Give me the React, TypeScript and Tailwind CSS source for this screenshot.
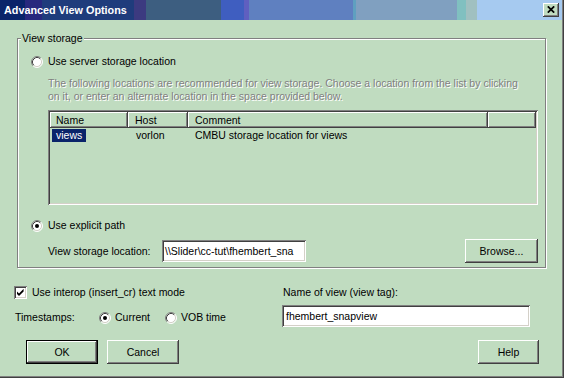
import React from "react";

// classic 3D edges, on the money-green dialog face
const sunken =
  "shadow-[inset_1px_1px_0_#808080,inset_-1px_-1px_0_#fff,inset_2px_2px_0_#404040,inset_-2px_-2px_0_#d4d0c8]";
const raised =
  "shadow-[inset_-1px_-1px_0_#404040,inset_1px_1px_0_#fff,inset_-2px_-2px_0_#808080]";

function Radio({ checked = false }: { checked?: boolean }) {
  return (
    <svg width="12" height="12" viewBox="0 0 12 12" className="shrink-0">
      <circle cx="6" cy="6" r="5" fill="#fff" />
      <path d="M2.11 9.89A5.5 5.5 0 0 1 9.89 2.11" fill="none" stroke="#808080" />
      <path d="M2.82 9.18A4.5 4.5 0 0 1 9.18 2.82" fill="none" stroke="#404040" />
      <path d="M9.89 2.11A5.5 5.5 0 0 1 2.11 9.89" fill="none" stroke="#fff" />
      <path d="M9.18 2.82A4.5 4.5 0 0 1 2.82 9.18" fill="none" stroke="#d4d0c8" />
      {checked && <circle cx="6" cy="6" r="2" fill="#000" />}
    </svg>
  );
}

function Checkbox() {
  return (
    <span className={`flex h-[13px] w-[13px] shrink-0 items-center justify-center bg-white ${sunken}`}>
      <svg width="7" height="7" viewBox="0 0 7 7">
        <polygon points="0,2.4 2,4.4 6.6,-0.2 6.6,2.4 2,7 0,5" fill="#000" />
      </svg>
    </span>
  );
}

function Button({
  label,
  width,
  isDefault = false,
}: {
  label: string;
  width: string;
  isDefault?: boolean;
}) {
  return (
    <div
      className={`flex h-[24px] items-center justify-center bg-[#c0dcc0] ${width} ${
        isDefault ? "border border-black" : ""
      }`}
    >
      <div className={`flex h-full w-full items-center justify-center ${raised}`}>
        {label}
      </div>
    </div>
  );
}

export default function App() {
  return (
    <div
      className={`flex h-[378px] w-[564px] flex-col overflow-hidden bg-[#c0dcc0] font-['Liberation_Sans',Arial,sans-serif] text-[10.5px] leading-[13px] text-black shadow-[inset_-1px_-1px_0_#404040,inset_-2px_-2px_0_#808080]`}
    >
      {/* Title bar */}
      <div className="mr-[2px] flex h-[20px] shrink-0 items-center bg-[linear-gradient(to_right,#0a246a_0_25px,#28287e_25px_42px,#1f3c7c_42px_134px,#3c3a80_134px_146px,#3d5e80_146px_221px,#3f5ec0_221px_244px,#5f5fc0_244px_249px,#5f80c0_249px_353px,#5fa0c0_353px_356px,#80a0c0_356px_457px,#80c0c0_457px_466px,#a0c0c0_466px_477px,#a6caf0_477px)] pl-[4px] pr-[3px]">
        <span className="text-[10.8px] font-bold leading-none text-white">
          Advanced View Options
        </span>
        <div
          className={`ml-auto flex h-[14px] w-[16px] items-center justify-center bg-[#c0dcc0] ${raised}`}
        >
          <svg width="8" height="7" viewBox="0 0 8 7" className="-mt-px -ml-px">
            <path d="M0.8 0.3L7.2 6.7M7.2 0.3L0.8 6.7" stroke="#000" strokeWidth="1.7" />
          </svg>
        </div>
      </div>

      {/* View storage group */}
      <fieldset className="ml-[17px] mt-[12px] w-[529px] border border-[#808080] pb-[4px] shadow-[1px_1px_0_#fff,inset_1px_1px_0_#fff]">
        <legend className="ml-[3px] bg-[#c0dcc0] px-[1px] leading-[13px]">
          View storage
        </legend>

        <div className="mt-[10px] flex h-[13px] items-center gap-[5px] pl-[13px]">
          <Radio />
          <span>Use server storage location</span>
        </div>

        <p className="ml-[30px] mt-[9px] whitespace-nowrap text-[#808080] [text-shadow:1px_1px_0_#fff]">
          The following locations are recommended for view storage. Choose a location from the
          list by clicking
          <br />
          on it, or enter an alternate location in the space provided below.
        </p>

        {/* location list */}
        <div className={`ml-[30px] mt-[7px] h-[95px] w-[490px] p-[2px] ${sunken}`}>
          <div className="flex h-[16px]">
            <div className={`flex w-[78px] items-center pl-[6px] ${raised}`}>Name</div>
            <div className={`flex w-[60px] items-center pl-[7px] ${raised}`}>Host</div>
            <div className={`flex w-[300px] items-center pl-[7px] ${raised}`}>Comment</div>
            <div className={`flex-1 ${raised}`} />
          </div>
          <div className="mt-[1px] flex h-[13px] items-center">
            <div className="w-[78px]">
              <span className="ml-[2px] inline-block bg-[#0a246a] px-[4px] text-white">
                views
              </span>
            </div>
            <div className="w-[60px] pl-[8px]">vorlon</div>
            <div className="w-[300px] pl-[7px]">CMBU storage location for views</div>
          </div>
        </div>

        <div className="mt-[14px] flex h-[13px] items-center gap-[5px] pl-[13px]">
          <Radio checked />
          <span>Use explicit path</span>
        </div>

        <div className="ml-[30px] mt-[7px] flex h-[24px] w-[490px] items-center">
          <span className="w-[114px]">View storage location:</span>
          <div
            className={`flex h-[22px] w-[144px] items-center whitespace-nowrap bg-white pl-[3px] ${sunken}`}
          >
            {"\\\\Slider\\cc-tut\\fhembert_sna"}
          </div>
          <div className="ml-auto">
            <Button label="Browse..." width="w-[73px]" />
          </div>
        </div>
      </fieldset>

      {/* Options below the group */}
      <div className="flex pl-[14px]">
        <div className="flex w-[268px] flex-col">
          <div className="mt-[18px] flex h-[13px] items-center gap-[5px]">
            <Checkbox />
            <span>Use interop (insert_cr) text mode</span>
          </div>
          <div className="mt-[12px] flex h-[13px] items-center">
            <span className="w-[85px] pl-[1px]">Timestamps:</span>
            <div className="flex w-[66px] items-center gap-[4px]">
              <Radio checked />
              <span>Current</span>
            </div>
            <div className="flex items-center gap-[4px]">
              <Radio />
              <span>VOB time</span>
            </div>
          </div>
        </div>
        <div className="flex flex-col">
          <div className="mt-[18px] h-[13px] pl-[1px]">Name of view (view tag):</div>
          <div
            className={`mt-[6px] flex h-[22px] w-[248px] items-center bg-white pl-[4px] ${sunken}`}
          >
            fhembert_snapview
          </div>
        </div>
      </div>

      {/* Dialog buttons */}
      <div className="mt-[13px] flex w-[539px] gap-[9px] pl-[26px]">
        <Button label="OK" width="w-[72px]" isDefault />
        <Button label="Cancel" width="w-[72px]" />
        <div className="ml-auto">
          <Button label="Help" width="w-[61px]" />
        </div>
      </div>
    </div>
  );
}
